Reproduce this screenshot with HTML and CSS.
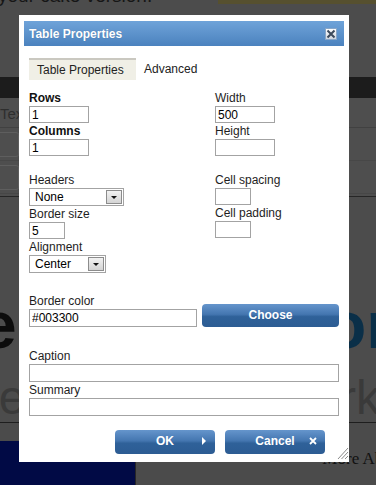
FILE: index.html
```html
<!DOCTYPE html>
<html lang="en">
<head>
  <meta charset="UTF-8" />
  <title>Table Properties</title>
  <link rel="stylesheet" href="styles.css">
</head>
<body>

  <div class="page">
    <div class="bg-top">
      <p class="bg-tagline">your cake version.</p>
      <div class="bg-strip"></div>
    </div>
    <div class="bg-nav"></div>
    <div class="bg-toolbar">
      <div class="bg-tabs"><span>Text</span></div>
      <div class="bg-tools">
        <span class="tool"></span><span class="tool"></span><span class="tool"></span>
      </div>
      <div class="bg-tools">
        <span class="tool"></span><span class="tool"></span><span class="tool"></span>
      </div>
    </div>
    <div class="bg-hero">
      <div class="hero-line hero-big"><span class="hero-left">er</span><span class="hero-right">or</span></div>
      <div class="hero-line hero-light"><span class="hero-left">le</span><span class="hero-right">rk</span></div>
    </div>
    <div class="bg-foot">
      <div class="foot-navy"></div>
      <div class="foot-main"><span>More About</span></div>
    </div>
  </div>

  <div class="dialog">
    <div class="dlg-title">
      <span>Table Properties</span>
      <span class="dlg-close">
        <svg width="10" height="10" viewBox="0 0 10 10"><path d="M1.5 1.5 L8.5 8.5 M8.5 1.5 L1.5 8.5" stroke="#3c4a5c" stroke-width="2"/></svg>
      </span>
    </div>

    <div class="dlg-body">
      <div class="tabs">
        <span class="tab active">Table Properties</span>
        <span class="tab">Advanced</span>
      </div>

      <div class="cols">
        <div class="col col-left">
          <div class="lbl bold">Rows</div>
          <input class="field w60" type="text" value="1" />
          <div class="lbl bold">Columns</div>
          <input class="field w60" type="text" value="1" />
          <div class="lbl spaced">Headers</div>
          <div class="select w95"><span>None</span><span class="arrow"></span></div>
          <div class="lbl">Border size</div>
          <input class="field w36" type="text" value="5" />
          <div class="lbl">Alignment</div>
          <div class="select w77"><span>Center</span><span class="arrow"></span></div>
        </div>
        <div class="col">
          <div class="lbl">Width</div>
          <input class="field w60" type="text" value="500" />
          <div class="lbl">Height</div>
          <input class="field w60" type="text" value="" />
          <div class="lbl spaced">Cell spacing</div>
          <input class="field w36" type="text" value="" />
          <div class="lbl">Cell padding</div>
          <input class="field w36" type="text" value="" />
        </div>
      </div>

      <div class="color-row">
        <div class="color-field">
          <div class="lbl">Border color</div>
          <input class="field w168" type="text" value="#003300" />
        </div>
        <button class="btn btn-choose">Choose</button>
      </div>

      <div class="lbl caption-lbl">Caption</div>
      <input class="field wide" type="text" value="" />
      <div class="lbl">Summary</div>
      <input class="field wide" type="text" value="" />

      <div class="actions">
        <button class="btn btn-action">OK<span class="btn-icon">
          <svg width="6" height="8" viewBox="0 0 6 8"><path d="M1 0 L5 4 L1 8 Z" fill="#fff"/></svg>
        </span></button>
        <button class="btn btn-action">Cancel<span class="btn-icon">
          <svg width="8" height="8" viewBox="0 0 8 8"><path d="M1 1 L7 7 M7 1 L1 7" stroke="#fff" stroke-width="1.8"/></svg>
        </span></button>
      </div>
    </div>

    <svg class="grip" width="12" height="14" viewBox="0 0 12 14">
      <path d="M11 2 L1 13 M11 6 L4.5 13 M11 10 L8 13" stroke="#8a8a8a" stroke-width="1"/>
    </svg>
  </div>

</body>
</html>
```

FILE: styles.css
```css
* {
  box-sizing: border-box;
}

body {
  margin: 0;
  width: 376px;
  height: 485px;
  overflow: hidden;
  background: #4b4b4b;
  font-family: "Liberation Sans", Arial, sans-serif;
  font-size: 12px;
}

/* dimmed page behind the dialog */

.page {
  display: flex;
  flex-direction: column;
  height: 485px;
}

.bg-top {
  height: 77px;
  position: relative;
  background: #4c4c4c;
}

.bg-tagline {
  margin: -15px 0 0 -2px;
  font-size: 19px;
  color: #161616;
}

.bg-strip {
  position: absolute;
  top: 0;
  left: 218px;
  right: 0;
  height: 4px;
  background: #56502f;
}

.bg-nav {
  height: 21px;
  background: #1c1c1c;
}

.bg-toolbar {
  height: 99px;
  background: #4e4e4e;
  border-bottom: 1px solid #262626;
}

.bg-tabs {
  height: 30px;
  padding: 7px 0 0 0;
  font-size: 15px;
  color: #2e2e2e;
  border-bottom: 1px solid #414141;
}

.bg-tools {
  display: flex;
  gap: 4px;
  height: 33px;
  padding: 4px 0 0 0;
  border-bottom: 1px solid #474747;
}

.tool {
  width: 26px;
  height: 25px;
  border: 1px solid #5e5e5e;
  border-radius: 4px;
  margin-left: -6px;
}

.bg-hero {
  flex: 1;
  background: #4c4c4c;
  padding-top: 98px;
  border-bottom: 1px solid #1e1e1e;
  overflow: hidden;
}

.hero-line {
  display: flex;
  justify-content: space-between;
  white-space: nowrap;
}

.hero-big {
  font-size: 66px;
  font-weight: bold;
  line-height: 60px;
  color: #0c0c0c;
}

.hero-big .hero-left {
  margin-left: -20px;
}

.hero-big .hero-right {
  margin-right: -16px;
  color: #0a2f48;
}

.hero-light {
  margin-top: 18px;
  font-size: 48px;
  line-height: 50px;
  color: #3a3a3a;
}

.hero-light .hero-left {
  margin-left: -12px;
}

.hero-light .hero-right {
  margin-right: -4px;
}

.bg-foot {
  display: flex;
  height: 62px;
}

.foot-navy {
  width: 135px;
  margin-top: 18px;
  background: #010a45;
}

.foot-main {
  flex: 1;
  border-left: 1px solid #262626;
  text-align: right;
  font-family: "Liberation Serif", serif;
  font-size: 17px;
  color: #111;
  padding-top: 26px;
  margin-right: -29px;
}

/* dialog */

.dialog {
  position: absolute;
  left: 19px;
  top: 15px;
  width: 330px;
  height: 447px;
  background: #fff;
  padding: 6px 5px 0 5px;
}

.dlg-title {
  display: flex;
  justify-content: space-between;
  align-items: center;
  height: 25px;
  padding: 0 7px 0 5px;
  background: linear-gradient(#6fa3d9, #4b82be);
  color: #fff;
  font-weight: bold;
  font-size: 12px;
  text-shadow: 0 0 1px rgba(0, 0, 0, 0.2);
}

.dlg-close {
  display: flex;
  align-items: center;
  justify-content: center;
  width: 12px;
  height: 12px;
  background: linear-gradient(#ffffff, #cfd6df);
  border: 1px solid #88a6c8;
}

.dlg-body {
  padding: 0 5px;
}

.tabs {
  display: flex;
  margin-top: 12px;
  height: 22px;
}

.tab {
  display: flex;
  align-items: center;
  padding: 0 8px;
  color: #222;
}

.tab.active {
  width: 107px;
  background: #f0efe6;
  border-top: 2px solid #cac8c0;
}

.cols {
  display: flex;
  margin-top: 10px;
}

.col {
  display: flex;
  flex-direction: column;
  align-items: flex-start;
}

.col-left {
  width: 186px;
}

.lbl {
  height: 16px;
  line-height: 16px;
  color: #1e1e1e;
}

.lbl.bold {
  font-weight: bold;
  color: #111;
}

.lbl.spaced {
  margin-top: 16px;
}

.field {
  display: block;
  height: 17px;
  margin: 0;
  padding: 0 2px;
  border: 1px solid #a3a3a3;
  font-family: "Liberation Sans", Arial, sans-serif;
  font-size: 12px;
  color: #000;
  background: #fff;
}

.w60 { width: 60px; }
.w36 { width: 36px; }
.w168 { width: 168px; height: 18px; }
.wide { width: 310px; height: 18px; }

.select {
  display: flex;
  justify-content: space-between;
  align-items: center;
  height: 18px;
  border: 1px solid #a3a3a3;
  padding: 0 1px 0 5px;
  color: #000;
}

.w95 { width: 95px; }
.w77 { width: 77px; }

.arrow {
  position: relative;
  width: 16px;
  height: 14px;
  background: linear-gradient(#f2f2f2, #d4d4d4);
  border: 1px solid #8c8c8c;
}

.arrow::after {
  content: "";
  position: absolute;
  left: 4px;
  top: 5px;
  border-left: 3px solid transparent;
  border-right: 3px solid transparent;
  border-top: 3px solid #111;
}

.color-row {
  display: flex;
  align-items: flex-end;
  margin-top: 20px;
}

.btn {
  border: none;
  border-radius: 4px;
  background: linear-gradient(#6595cc 0%, #4476b0 45%, #2f6199 55%, #2c5c93 100%);
  color: #fff;
  font-family: "Liberation Sans", Arial, sans-serif;
  font-weight: bold;
  font-size: 12px;
  padding: 0;
}

.btn-choose {
  width: 137px;
  height: 23px;
  margin: 0 0 0 5px;
  padding-bottom: 2px;
}

.caption-lbl {
  margin-top: 21px;
}

.actions {
  display: flex;
  justify-content: flex-end;
  gap: 10px;
  margin: 14px 14px 0 0;
}

.btn-action {
  position: relative;
  width: 100px;
  height: 24px;
  padding-bottom: 2px;
}

.btn-icon {
  position: absolute;
  right: 8px;
  top: 7px;
  display: flex;
}

.grip {
  position: absolute;
  right: 0;
  bottom: 2px;
}
```
